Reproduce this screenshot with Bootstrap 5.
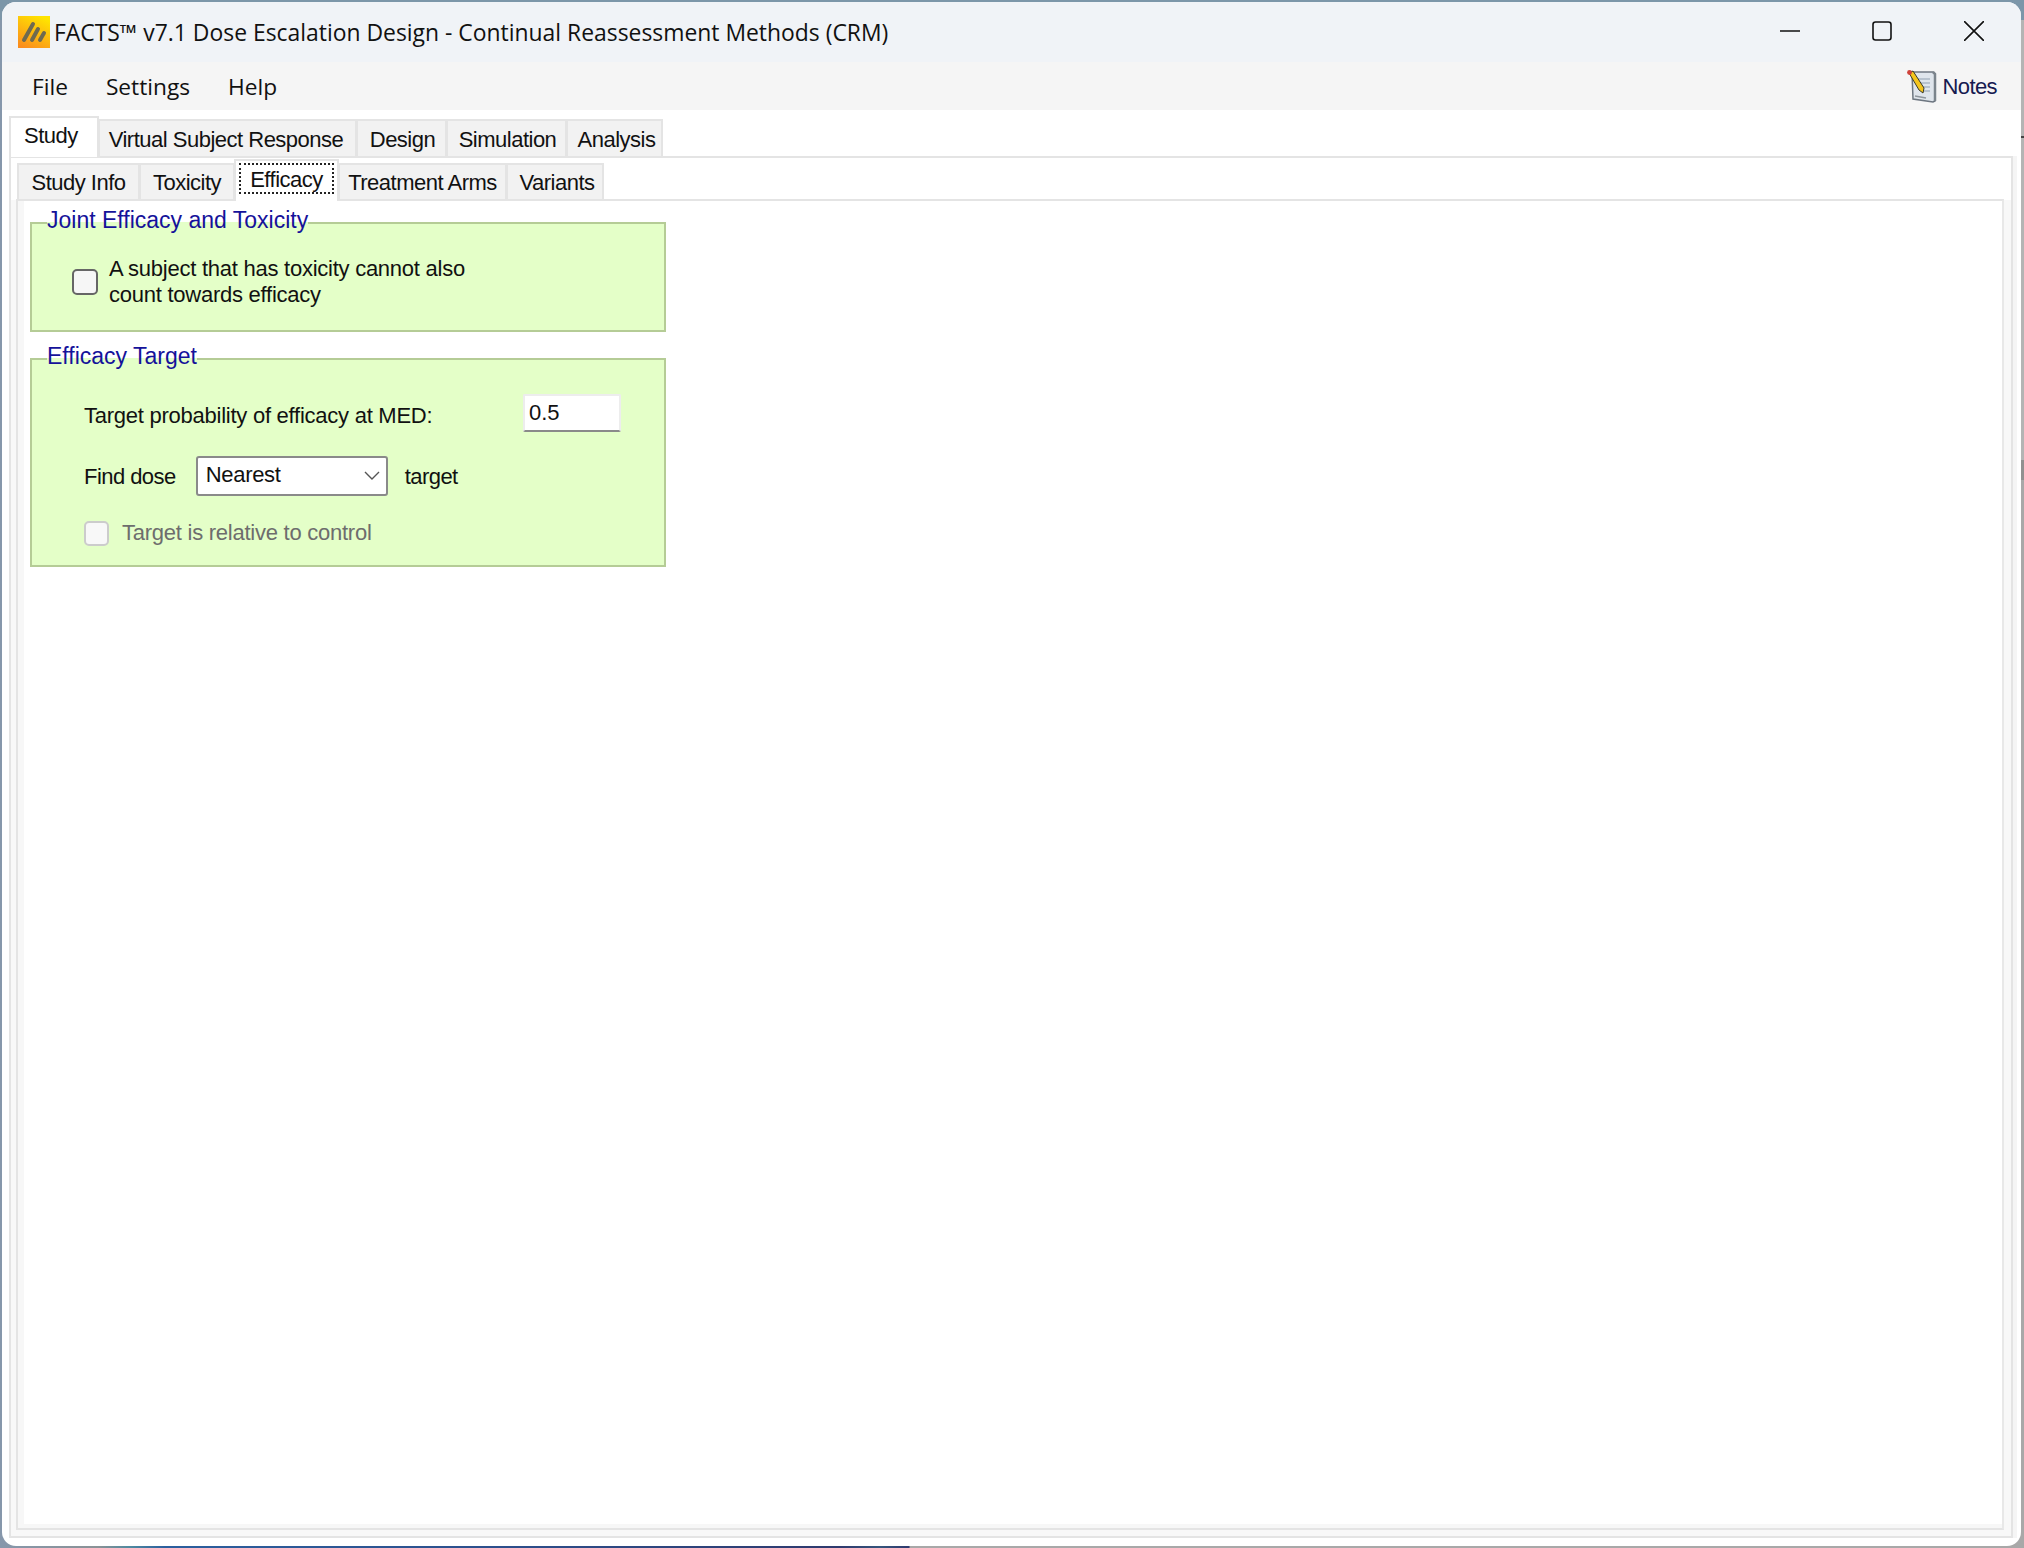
<!DOCTYPE html>
<html lang="en">
<head>
<meta charset="utf-8">
<title>FACTS</title>
<link href="https://cdn.jsdelivr.net/npm/bootstrap@5.3.0/dist/css/bootstrap.min.css" rel="stylesheet">
<style>
html,body{margin:0;height:100%;background:#fff;overflow:hidden}
.desk{width:2024px;height:1548px;padding:2px 3px 2px 2px;background:linear-gradient(90deg,#8697ab 0,#8a9296 98px,#4f8aa0 130px,#2b5f9e 165px,#2c4f8c 500px,#2f3a6e 840px,#35557c 880px,#2f3a6e 909px,#a8a8a8 910px,#a8a8a8 100%);position:relative}
.deskTop{position:absolute;left:0;top:0;right:0;height:20px;background:#7c96a9}
.deskSide{position:absolute;right:0;top:20px;bottom:0;width:3px;background:linear-gradient(#b4b4b4 0,#b4b4b4 116px,#444 116px,#444 118px,#b4b4b4 118px,#b4b4b4 440px,#909090 440px,#909090 460px,#a8a8a8 460px)}
.win{position:relative;height:100%;background:#fff;border-radius:14px;overflow:hidden;display:flex;flex-direction:column;font-family:"Liberation Sans",Arial,sans-serif;color:#000}
.ttl{height:60px;flex:none;background:#f0f3f7;display:flex;align-items:center;padding-left:16px;font-family:"Open Sans",sans-serif;font-size:22.9px;color:#111}
.ttl span{margin-left:4px;padding-top:2px}
.wbtns{margin-left:auto;display:flex;align-items:center;margin-right:1px}
.wbtn{width:92px;height:60px;display:flex;align-items:center;justify-content:center;margin-top:-3px}
.mbar{height:48px;flex:none;background:#f5f5f5;display:flex;align-items:center;padding-left:15px;font-family:"Open Sans",sans-serif;font-size:22.7px}
.mitem{padding:2px 15px 0;margin-right:8px;color:#111}
.notes{margin-left:auto;margin-right:24px;display:flex;align-items:center;gap:5px;font-family:"Liberation Sans",sans-serif;font-size:22px;letter-spacing:-.6px;color:#161a50}
.main{flex:1;display:flex;flex-direction:column;padding:6px 8px 8px 7px;min-height:0}
.tabrow{flex:none;display:flex;align-items:flex-end;border:0;padding:0;margin:0;list-style:none}
.tb{display:block;text-align:center;font-size:22px;letter-spacing:-.5px;color:#111;background:#f2f2f2;border:2px solid #e4e4e4;border-bottom:0;white-space:nowrap;margin-left:-1px}
.tabrow1 .tb{height:37px;line-height:37px}
.tabrow1 .tb.on{height:41px;line-height:35px;background:#fff;margin-left:0;text-align:left;padding-left:13px;margin-bottom:-1px;position:relative}
.tabrow2{padding-left:2px}
.tabrow2 .tb{height:36px;line-height:35px}
.tabrow2 .tb.on{height:42px;background:#fff;line-height:28px;padding:2px 3px;margin-bottom:-2px;position:relative}
.dots{display:block;height:31px;line-height:29px;border:2px dotted #222;letter-spacing:-.5px}
.w1{width:90px}.w2{width:259px;padding-right:3px}.w3{width:91px;padding-left:2px}.w4{width:121px;padding-left:2px}.w5{width:97px;padding-left:4px}
.w6{width:123px}.w7{width:96px}.w8{width:105px}.w9{width:169px}.w10{width:98px;padding-left:4px}
.pane1{flex:1;min-height:0;display:flex;flex-direction:column;border:2px solid #e4e4e4;padding:1px 7px 6px 5px;background:linear-gradient(#fff 42px,#f8f8f8 42px);box-shadow:4px 0 0 #f5f5f5}
.pane2{flex:1;min-height:0;border:2px solid #e4e4e4;border-right-color:#e8e8e8;padding:7px 0 0 12px;background:#fff;box-shadow:inset 6px 0 0 #f7f7f7,inset 0 -4px 0 #f7f7f7}
.grp{width:636px;background:#e4ffc8;border:2px solid #b5cc96;margin:0;padding:0;position:relative;min-width:0}
.grp legend{float:none;width:auto;font-size:23px;letter-spacing:0;color:#15129a;margin:0 0 0 15px;padding:0 0 5px;line-height:24px}
.g1{height:124px}
.g2{height:223px;margin-top:12px}
.chk1{display:flex;align-items:center;padding:18px 0 0 40px;gap:11px}
.chk1 .txt{padding-top:1px}
.txt{font-size:22px;letter-spacing:-.25px;color:#111;line-height:26px}
.tight{letter-spacing:-.55px;padding-top:2px}
.form-check-input.box{width:26px;height:26px;margin:0;border:2px solid #666;border-radius:5px;background-color:#f6f6f6;flex:none}
.form-check-input.box2{width:25px;height:25px;margin:0;border:2px solid #ccc;border-radius:5px;background-color:#f8f8f8;opacity:1;flex:none}
.rw1{display:flex;align-items:center;padding:20px 0 0 52px;height:65px}
.rw1 .form-control{width:98px;height:38px;margin-left:auto;margin-right:43px;padding:0 4px;font-family:"Liberation Sans",sans-serif;font-size:22px;border:2px solid #ededed;border-bottom:2px solid #8a8a8a;border-radius:2px;color:#111;background:#fff;margin-top:-5px}
.rw2{display:flex;align-items:center;padding:0 0 0 52px;margin-top:18px;height:40px;gap:0}
.rw2 .form-select{width:192px;height:40px;margin-left:20px;margin-right:17px;padding:0 0 2px 8px;font-size:22px;font-family:"Liberation Sans",sans-serif;letter-spacing:-.3px;border:2px solid #8a8a8a;border-radius:3px;color:#111;background-image:none;background-color:#fff;line-height:34px}
.selwrap{position:relative;display:block}
.selwrap svg{position:absolute;right:25px;top:15px}
.rw3{display:flex;align-items:center;padding:0 0 0 52px;margin-top:24px;gap:13px}
.off{color:#6d6d6d}
</style>
</head>
<body>
<div class="desk">
<div class="deskTop"></div><div class="deskSide"></div>
<div class="win">
  <div class="ttl">
    <svg width="32" height="32" viewBox="0 0 32 32"><defs><linearGradient id="lg" x1="0.7" y1="0" x2="0.2" y2="1"><stop offset="0" stop-color="#ffe400"/><stop offset="1" stop-color="#fb8d1d"/></linearGradient></defs><rect width="32" height="32" fill="url(#lg)"/><g stroke="#6f6a50" stroke-width="4" stroke-linecap="round"><line x1="6" y1="24" x2="15" y2="8"/><line x1="14" y1="24" x2="20" y2="13"/><line x1="22" y1="24" x2="26" y2="17"/></g></svg>
    <span>FACTS™ v7.1 Dose Escalation Design - Continual Reassessment Methods (CRM)</span>
    <div class="wbtns">
      <div class="wbtn"><svg width="20" height="20" viewBox="0 0 20 20"><line x1="0" y1="10" x2="20" y2="10" stroke="#111" stroke-width="1.6"/></svg></div>
      <div class="wbtn"><svg width="20" height="20" viewBox="0 0 20 20"><rect x="1" y="1" width="18" height="18" rx="2.5" fill="none" stroke="#111" stroke-width="1.6"/></svg></div>
      <div class="wbtn"><svg width="20" height="20" viewBox="0 0 20 20"><path d="M0 0L20 20M20 0L0 20" stroke="#111" stroke-width="1.6"/></svg></div>
    </div>
  </div>
  <div class="mbar">
    <div class="mitem">File</div><div class="mitem">Settings</div><div class="mitem">Help</div>
    <div class="notes">
      <svg width="32" height="34" viewBox="0 0 32 34"><path d="M6 3h21l2 2v27l-2 1-20-3z" fill="#dfe5ec" stroke="#6d7680" stroke-width="1.5"/><path d="M27 3l2 2v27" fill="none" stroke="#7b848c" stroke-width="2.5"/><path d="M12 10h12M13 14h11M14 18h10M15 22h9" stroke="#aab6c4" stroke-width="1.3"/><path d="M9 27l11 2" stroke="#8d959c" stroke-width="1.5"/><path d="M3 4l4-2 11 17-1 5-4-3z" fill="#f4c51c" stroke="#3a3a2a" stroke-width="1"/><circle cx="3.5" cy="3.5" r="2.4" fill="#d0423a"/></svg>
      Notes
    </div>
  </div>
  <div class="main">
    <ul class="tabrow tabrow1">
      <li class="tb on w1">Study</li><li class="tb w2">Virtual Subject Response</li><li class="tb w3">Design</li><li class="tb w4">Simulation</li><li class="tb w5">Analysis</li>
    </ul>
    <div class="pane1">
      <ul class="tabrow tabrow2">
        <li class="tb w6">Study Info</li><li class="tb w7">Toxicity</li><li class="tb on w8"><span class="dots">Efficacy</span></li><li class="tb w9">Treatment Arms</li><li class="tb w10">Variants</li>
      </ul>
      <div class="pane2">
        <fieldset class="grp g1">
          <legend>Joint Efficacy and Toxicity</legend>
          <div class="chk1">
            <input class="form-check-input box" type="checkbox" aria-label="toxicity">
            <div class="txt">A subject that has toxicity cannot also<br>count towards efficacy</div>
          </div>
        </fieldset>
        <fieldset class="grp g2">
          <legend>Efficacy Target</legend>
          <div class="rw1"><span class="txt">Target probability of efficacy at MED:</span><input class="form-control" type="text" value="0.5" aria-label="target"></div>
          <div class="rw2"><span class="txt tight">Find dose</span>
            <span class="selwrap"><select class="form-select" aria-label="dose"><option>Nearest</option></select>
            <svg width="16" height="10" viewBox="0 0 16 10"><path d="M1 1l7 7 7-7" fill="none" stroke="#555" stroke-width="1.4"/></svg></span>
            <span class="txt tight">target</span></div>
          <div class="rw3"><input class="form-check-input box2" type="checkbox" disabled aria-label="relative"><span class="txt off">Target is relative to control</span></div>
        </fieldset>
      </div>
    </div>
  </div>
</div>
</div>
<script src="https://cdn.jsdelivr.net/npm/bootstrap@5.3.0/dist/js/bootstrap.bundle.min.js"></script>
</body>
</html>
